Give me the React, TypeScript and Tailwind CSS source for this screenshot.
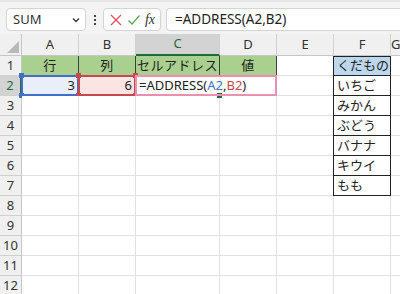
import React from 'react'

// Excel-like sheet: formula bar + grid with ADDRESS formula being edited

const FONT = { fontFamily: '"Noto Sans", "Noto Sans CJK JP", sans-serif' }

const COLS = ['A', 'B', 'C', 'D', 'E', 'F', 'G']
const ROWS = [1, 2, 3, 4, 5, 6, 7, 8, 9, 10, 11, 12]
const FRUITS = ['いちご', 'みかん', 'ぶどう', 'バナナ', 'キウイ', 'もも']
const ROW1: Record<string, string> = { A: '行', B: '列', C: 'セルアドレス', D: '値' }

function Handle({ className }: { className: string }) {
  return <span className={`absolute w-[5px] h-[5px] ${className}`} />
}

function Cell({ row, col }: { row: number; col: string }) {
  const base = 'relative h-[20px] border-r border-b border-[#e1e1e1] text-[13px] text-[#222] flex items-center whitespace-nowrap'

  if (row === 1 && ROW1[col]) {
    return (
      <div className={`${base} justify-center bg-[#a9d08e] border-r-[#3f3f3f] border-b-[#5f7f4f] tracking-[0.5px]`}>
        {ROW1[col]}
      </div>
    )
  }
  if (col === 'F' && row <= 7) {
    const label = row === 1 ? 'くだもの' : FRUITS[row - 2]
    return (
      <div
        className={`${base} pl-[3px] border-l border-l-[#222] border-r-[#222] border-b-[#222] -ml-px ${
          row === 1 ? 'bg-[#bdd7ee] border-t border-t-[#222]' : 'bg-white'
        }`}
      >
        {label}
      </div>
    )
  }
  if (row === 2 && col === 'A') {
    return (
      <div className={`${base} justify-end pr-[3px] bg-[#e9eef8]`}>
        <span className="absolute inset-[-1px] border-2 border-[#3f6fc6] pointer-events-none" />
        <Handle className="bg-[#3f6fc6] -left-[3px] -top-[3px]" />
        <Handle className="bg-[#3f6fc6] -right-[3px] -top-[3px]" />
        <Handle className="bg-[#3f6fc6] -left-[3px] -bottom-[3px]" />
        <Handle className="bg-[#3f6fc6] -right-[3px] -bottom-[3px]" />
        <span className="relative">3</span>
      </div>
    )
  }
  if (row === 2 && col === 'B') {
    return (
      <div className={`${base} justify-end pr-[3px] bg-[#fbe4e4]`}>
        <span className="absolute inset-[-1px] border-2 border-[#c8484f] pointer-events-none" />
        <Handle className="bg-[#c8484f] -left-[3px] -top-[3px]" />
        <Handle className="bg-[#c8484f] -right-[3px] -top-[3px]" />
        <Handle className="bg-[#c8484f] -left-[3px] -bottom-[3px]" />
        <Handle className="bg-[#c8484f] -right-[3px] -bottom-[3px]" />
        <span className="relative">6</span>
      </div>
    )
  }
  if (row === 2 && col === 'C') {
    return (
      <div className={`${base} col-span-2 bg-white z-10`}>
        <span className="absolute left-0 bottom-[-1px] w-[84px] h-[2px] bg-[#1e6b3c]" />
        <span className="absolute left-[81px] bottom-[-3px] w-[5px] h-[5px] bg-[#1e6b3c]" />
        <span className="absolute inset-[-1px] border-2 border-[#ec8fb0] pointer-events-none" />
        <span className="relative pl-[3px] text-[13px]">
          =ADDRESS(<span className="text-[#3f6fc6]">A2</span>,<span className="text-[#c8484f]">B2</span>)
        </span>
      </div>
    )
  }
  if (row === 2 && col === 'D') return null
  return <div className={`${base} bg-white`} />
}

export default function App() {
  return (
    <div className="w-[400px] h-[294px] overflow-hidden bg-white" style={FONT}>
      {/* Formula bar */}
      <div className="h-[34px] bg-[#f3f3f3] border-t-2 border-[#e4e4e4] flex items-start pt-[6px]">
        <div className="ml-[6px] w-[80px] h-[23px] bg-white border border-[#d4d4d4] rounded-[4px] flex items-center justify-between pl-[6px] pr-[4px] text-[13px] text-[#333]">
          <span>SUM</span>
          <svg width="10" height="10" viewBox="0 0 10 10">
            <path d="M2 3.5 L5 6.5 L8 3.5" fill="none" stroke="#333" strokeWidth="1.3" />
          </svg>
        </div>
        <div className="w-[17px] h-[23px] flex flex-col items-center justify-center gap-[2px]">
          <span className="w-[2px] h-[2px] bg-[#444]" />
          <span className="w-[2px] h-[2px] bg-[#444]" />
          <span className="w-[2px] h-[2px] bg-[#444]" />
        </div>
        <div className="w-[58px] h-[23px] bg-white border border-[#d4d4d4] rounded-[4px] flex items-center justify-between px-[5px]">
          <svg width="14" height="14" viewBox="0 0 14 14">
            <path d="M2 2 L12 12 M12 2 L2 12" stroke="#e25050" strokeWidth="1.3" />
          </svg>
          <svg width="14" height="14" viewBox="0 0 14 14">
            <path d="M1.5 7.5 L5 11 L12.5 2.5" fill="none" stroke="#5ea25e" strokeWidth="1.3" />
          </svg>
          <span className="text-[14px] italic text-[#333] leading-none" style={{ fontFamily: '"Liberation Serif", "DejaVu Serif", serif' }}>
            fx
          </span>
        </div>
        <div className="ml-[5px] flex-1 h-[23px] bg-white border border-[#d4d4d4] rounded-l-[4px] border-r-0 flex items-center pl-[8px] text-[13.5px] text-[#222]">
          =ADDRESS(A2,B2)
        </div>
      </div>

      {/* Grid */}
      <div className="grid grid-cols-[22px_57px_57px_84px_57px_57px_57px_1fr]">
        {/* header row */}
        <div className="relative h-[22px] bg-[#f0f0f0] border-r border-b border-[#c6c6c6]">
          <svg className="absolute right-[2px] bottom-[2px]" width="12" height="12" viewBox="0 0 12 12">
            <path d="M12 0 L12 12 L0 12 Z" fill="#b9b9b9" />
          </svg>
        </div>
        {COLS.map((c) => (
          <div
            key={c}
            className={`h-[22px] flex items-center justify-center text-[13px] border-r border-[#d0d0d0] ${
              c === 'C'
                ? 'bg-[#d3d3d3] text-[#1e6b3c] border-b-2 border-b-[#1e6b3c]'
                : 'bg-[#f0f0f0] text-[#333] border-b border-b-[#c6c6c6]'
            }`}
          >
            {c}
          </div>
        ))}

        {ROWS.map((r) => (
          <React.Fragment key={r}>
            <div
              className={`h-[20px] flex items-center justify-center text-[13px] border-b border-[#d0d0d0] ${
                r === 2
                  ? 'bg-[#d3d3d3] text-[#1e6b3c] border-r-2 border-r-[#1e6b3c]'
                  : 'bg-[#f0f0f0] text-[#333] border-r border-r-[#c6c6c6]'
              }`}
            >
              {r}
            </div>
            {COLS.map((c) => (
              <Cell key={c} row={r} col={c} />
            ))}
          </React.Fragment>
        ))}
      </div>
    </div>
  )
}
